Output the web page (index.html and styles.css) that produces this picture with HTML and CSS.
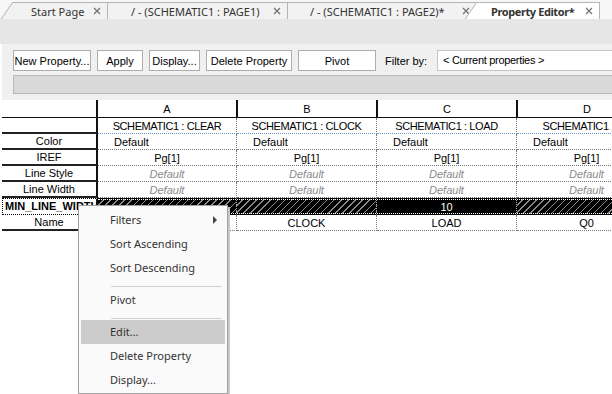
FILE: index.html
```html
<!DOCTYPE html>
<html lang="en">
<head>
  <meta charset="UTF-8" />
  <title>Property Editor</title>
  <link rel="stylesheet" href="styles.css">
</head>
<body>
  <!-- Document tabs -->
  <div class="tabs">
    <div class="tab t1">
      <svg class="slant" viewBox="0 0 12 17"><path d="M0 17L11.5 0.5H12V17Z" fill="#f2f2f2"/><path d="M0.3 17L11.5 0.5H12" fill="none" stroke="#b4b4b4"/></svg>
      <div class="tab-body w1"><span class="tab-label">Start Page</span><svg class="close" viewBox="0 0 8 8"><path d="M1 1L7 7M7 1L1 7"/></svg></div>
    </div>
    <div class="tab t2">
      <svg class="slant" viewBox="0 0 12 17"><path d="M0 17L11.5 0.5H12V17Z" fill="#f2f2f2"/><path d="M0.3 17L11.5 0.5H12" fill="none" stroke="#b4b4b4"/></svg>
      <div class="tab-body w2"><span class="tab-label">/ - (SCHEMATIC1 : PAGE1)</span><svg class="close" viewBox="0 0 8 8"><path d="M1 1L7 7M7 1L1 7"/></svg></div>
    </div>
    <div class="tab t3">
      <svg class="slant" viewBox="0 0 12 17"><path d="M0 17L11.5 0.5H12V17Z" fill="#f2f2f2"/><path d="M0.3 17L11.5 0.5H12" fill="none" stroke="#b4b4b4"/></svg>
      <div class="tab-body w3"><span class="tab-label">/ - (SCHEMATIC1 : PAGE2)*</span><svg class="close" viewBox="0 0 8 8"><path d="M1 1L7 7M7 1L1 7"/></svg></div>
    </div>
    <div class="tab active">
      <svg class="slant" viewBox="0 0 12 17"><path d="M0 17L11.5 0.5H12V17Z" fill="#fff"/><path d="M0.3 17L11.5 0.5H12" fill="none" stroke="#b4b4b4"/></svg>
      <div class="tab-body w4"><span class="tab-label">Property Editor*</span><svg class="close" viewBox="0 0 8 8"><path d="M1 1L7 7M7 1L1 7"/></svg></div>
    </div>
  </div>

  <div class="toolstrip"></div>

  <!-- Buttons and filter -->
  <div class="panel">
    <div class="btn-row">
      <button class="btn b-new">New Property...</button>
      <button class="btn b-apply">Apply</button>
      <button class="btn b-display">Display...</button>
      <button class="btn b-delete">Delete Property</button>
      <button class="btn b-pivot">Pivot</button>
      <span class="filter-label">Filter by:</span>
      <div class="filter-box">&lt; Current properties &gt;</div>
    </div>
    <div class="gray-bar"></div>
  </div>

  <!-- Property grid -->
  <div class="grid">
    <div class="row head">
      <div class="rh"></div>
      <div class="c ca">A</div>
      <div class="c">B</div>
      <div class="c">C</div>
      <div class="c">D</div>
    </div>
    <div class="row names">
      <div class="rh"></div>
      <div class="c ca">SCHEMATIC1 : CLEAR</div>
      <div class="c">SCHEMATIC1 : CLOCK</div>
      <div class="c">SCHEMATIC1 : LOAD</div>
      <div class="c">SCHEMATIC1 : Q0</div>
    </div>
    <div class="row">
      <div class="rh">Color</div>
      <div class="c ca left">Default</div>
      <div class="c left">Default</div>
      <div class="c left">Default</div>
      <div class="c left">Default</div>
    </div>
    <div class="row">
      <div class="rh">IREF</div>
      <div class="c ca">Pg[1]</div>
      <div class="c">Pg[1]</div>
      <div class="c">Pg[1]</div>
      <div class="c">Pg[1]</div>
    </div>
    <div class="row">
      <div class="rh">Line Style</div>
      <div class="c ca dim">Default</div>
      <div class="c dim">Default</div>
      <div class="c dim">Default</div>
      <div class="c dim">Default</div>
    </div>
    <div class="row">
      <div class="rh">Line Width</div>
      <div class="c ca dim">Default</div>
      <div class="c dim">Default</div>
      <div class="c dim">Default</div>
      <div class="c dim">Default</div>
    </div>
    <div class="row selected">
      <div class="rh">MIN_LINE_WIDTH</div>
      <div class="c ca hatch"></div>
      <div class="c hatch"></div>
      <div class="c solid">10</div>
      <div class="c hatch"></div>
    </div>
    <div class="row">
      <div class="rh">Name</div>
      <div class="c ca">CLEAR</div>
      <div class="c">CLOCK</div>
      <div class="c">LOAD</div>
      <div class="c">Q0</div>
    </div>
  </div>

  <!-- Context menu -->
  <div class="menu">
    <div class="item">Filters<span class="arrow"></span></div>
    <div class="item">Sort Ascending</div>
    <div class="item">Sort Descending</div>
    <div class="sep"></div>
    <div class="item">Pivot</div>
    <div class="sep"></div>
    <div class="item hot">Edit...</div>
    <div class="item">Delete Property</div>
    <div class="item">Display...</div>
  </div>
</body>
</html>
```

FILE: styles.css
```css
* { box-sizing: border-box; }
body {
  margin: 0; width: 612px; height: 394px; overflow: hidden;
  background: #fff; position: relative;
  font-family: "Liberation Sans", Arial, sans-serif; font-size: 11px; color: #000;
}

/* tabs */
.tabs {
  display: flex; height: 19px; padding: 2px 0 0 1px;
  background: #f7f7f7;
}
.tab { display: flex; position: relative; height: 17px; }
.t1 { z-index: 4; }
.t2 { z-index: 3; margin-left: -12px; }
.t3 { z-index: 2; margin-left: -12px; }
.active { z-index: 5; margin-left: -12px; }
.slant { width: 12px; height: 17px; flex: none; display: block; }
.tab-body {
  display: flex; align-items: center; height: 17px;
  background: #f2f2f2; border-top: 1px solid #b4b4b4; border-right: 1px solid #b4b4b4;
  font-family: "Noto Sans", sans-serif; font-size: 11px; color: #333;
}
.active .tab-body { background: #fff; }
.active .tab-label { font-weight: 700; letter-spacing: -0.4px; }
.w1 { width: 95px; padding-left: 18px; }
.w2 { width: 180px; padding-left: 23px; }
.w3 { width: 189px; padding-left: 22px; }
.w4 { width: 123px; padding-left: 14px; }
.close {
  width: 8px; height: 8px; margin-left: auto; margin-right: 6px;
  stroke: #707070; stroke-width: 1.2; fill: none;
}

.toolstrip { height: 25px; background: #e6e6e6; }

/* button panel */
.panel {
  height: 56px; margin-left: 2px; padding: 6px 0 0 11px;
  background: #f0f0f0;
}
.btn-row { display: flex; align-items: center; gap: 6px; height: 21px; }
.btn {
  height: 21px; padding: 0; background: #fff; border: 1px solid #adadad;
  font-family: "Liberation Sans", Arial, sans-serif; font-size: 11px; color: #000;
}
.b-new { width: 78px; }
.b-apply { width: 46px; }
.b-display { width: 51px; }
.b-delete { width: 86px; }
.b-pivot { width: 78px; }
.filter-label { margin-left: 3px; width: 46px; }
.filter-box {
  flex: 1; height: 21px; background: #fff; border: 1px solid #c5c5c5; border-right: none;
  padding: 3px 0 0 5px; letter-spacing: -0.3px;
}
.gray-bar {
  height: 19px; margin-top: 4px; background: #d9d9d9;
  border: 1px solid #b9b9b9; border-right: none;
}

/* grid */
.grid { margin-left: 2px; width: 610px; overflow: hidden; background: #fff; }
.row { display: flex; height: 16px; }
.rh {
  width: 96px; flex: none; text-align: center; line-height: 13px; padding-top: 1px;
  border-right: 2px solid #111; border-bottom: 2px solid #222;
}
.c {
  width: 140px; flex: none; text-align: center; line-height: 14px; padding-top: 1px;
  border-right: 1px dotted #777; border-bottom: 1px dotted #777;
  white-space: nowrap; overflow: hidden;
}
.c.ca { width: 139px; }
.head { height: 18px; }
.head .rh { border-bottom: 1px solid #111; }
.head .c { border-right: 2px solid #111; border-bottom: 1px solid #111; line-height: 15px; padding-top: 2px; }
.head .c.ca { width: 140px; }
.names .c { border-bottom-color: #6a98c8; letter-spacing: -0.4px; }
.left { text-align: left; padding-left: 16px; }
.dim { color: #8a8a8a; font-style: italic; }

.selected { height: 17px; }
.selected .rh {
  border: 1px dotted #000; border-right: 2px solid #111;
  text-align: left; padding: 1px 0 0 2px; font-weight: 700; line-height: 13px;
  white-space: nowrap; overflow: hidden;
}
.selected .c {
  background-color: #000; color: #fff;
  border-top: 1px solid #000; border-bottom: 1px solid #000; border-right: 1px dotted #aaa;
  line-height: 14px; padding-top: 1px; position: relative;
}
.selected .c::after {
  content: ""; position: absolute; left: 0; right: 0; top: 0; bottom: 0;
  border-top: 1px dotted #fff; border-bottom: 1px dotted #fff;
}
.hatch {
  background-image: repeating-linear-gradient(135deg, #000 0 4px, #8a8a8a 4px 5px);
}

/* context menu */
.menu {
  position: absolute; left: 78px; top: 205px; width: 150px; height: 189px;
  background: #fafafa; border: 1px solid #a0a0a0; padding: 2px;
  box-shadow: 2px 2px 0 #c8c8c8;
  font-family: "Noto Sans", sans-serif; font-size: 11px; color: #333;
}
.item {
  position: relative; height: 24px; line-height: 24px; padding-left: 29px;
}
.item.hot { background: #cccccc; }
.sep { height: 7px; margin: 0 3px 1px 30px; border-bottom: 1px solid #d0d0d0; }
.arrow {
  position: absolute; right: 8px; top: 8px; width: 0; height: 0;
  border-left: 4px solid #444; border-top: 4px solid transparent; border-bottom: 4px solid transparent;
}
```
